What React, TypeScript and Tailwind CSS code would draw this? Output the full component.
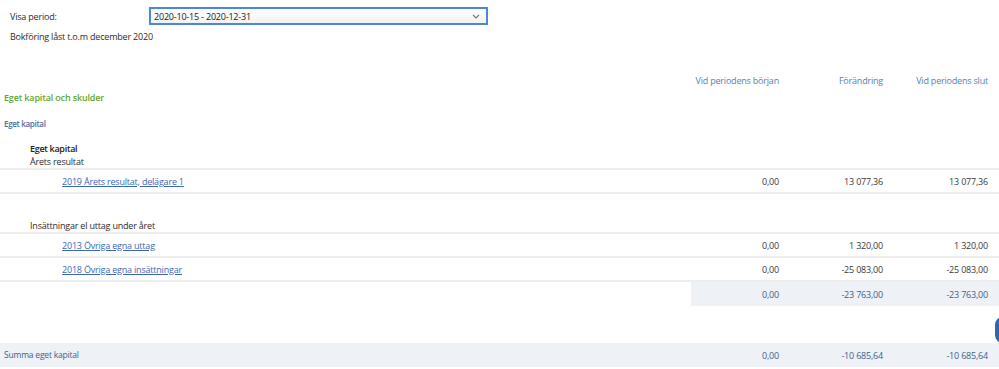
import React from "react";

const cols = ["w-[99px]", "w-[104px]", "w-[105px]"];

function Nums({ vals, cls }: { vals: string[]; cls: string }) {
  return (
    <div className="flex">
      {vals.map((v, i) => (
        <div key={i} className={`${cols[i]} pr-[11px] text-right whitespace-nowrap ${cls}`}>
          {v}
        </div>
      ))}
    </div>
  );
}

function Row({ label, vals }: { label: string; vals: string[] }) {
  return (
    <div className="flex items-center h-[24px] border-b-2 border-[#ededed]">
      <div className="flex-1 pl-[62px]">
        <a className="text-[#3d68b4] underline cursor-pointer">{label}</a>
      </div>
      <Nums vals={vals} cls="text-[#3a3a3a]" />
    </div>
  );
}

export default function App() {
  return (
    <div className="relative w-[999px] h-[369px] overflow-hidden bg-white text-[9px] tracking-[-0.2px] text-[#2b2b2b] font-['Open_Sans',sans-serif] leading-none">
      <div className="pt-[7px] flex items-center h-[25px]">
        <span className="w-[149px] pl-[10px]">Visa period:</span>
        <div className="w-[339px] h-[18px] border-2 border-[#4a88dc] bg-gradient-to-b from-white to-[#f2f2f2] flex items-center justify-between pl-[3px] pr-[6px]">
          <span className="text-[#222]">2020-10-15 - 2020-12-31</span>
          <svg width="8" height="5" viewBox="0 0 8 5" className="mt-[1px]">
            <path d="M1 1 L4 4 L7 1" fill="none" stroke="#777" strokeWidth="1.1" />
          </svg>
        </div>
      </div>
      <div className="h-[20px] flex items-center pl-[10px] mt-[1px]">Bokföring låst t.o.m december 2020</div>
      <div className="h-[26px]" />
      <div className="flex items-center h-[16px]">
        <div className="flex-1" />
        <Nums vals={["Vid periodens början", "Förändring", "Vid periodens slut"]} cls="text-[#4f7fc0]" />
      </div>
      <div className="h-[18px] flex items-center pl-[4px] text-[9px] tracking-[-0.15px] font-semibold text-[#62a82e]">Eget kapital och skulder</div>
      <div className="h-[10px]" />
      <div className="h-[16px] flex items-center pl-[4px] text-[8px] tracking-[-0.3px] font-semibold text-[#4a6ea8]">Eget kapital</div>
      <div className="h-[9px]" />
      <div className="h-[14px] flex items-center pl-[30px] font-semibold tracking-[-0.3px] text-[#222]">Eget kapital</div>
      <div className="h-[15px] flex items-center pl-[30px] border-b-2 border-[#ededed]">Årets resultat</div>
      <Row label="2019 Årets resultat, delägare 1" vals={["0,00", "13 077,36", "13 077,36"]} />
      <div className="h-[24px]" />
      <div className="h-[16px] flex items-center pl-[30px] border-b-2 border-[#ededed]">Insättningar el uttag under året</div>
      <Row label="2013 Övriga egna uttag" vals={["0,00", "1 320,00", "1 320,00"]} />
      <Row label="2018 Övriga egna insättningar" vals={["0,00", "-25 083,00", "-25 083,00"]} />
      <div className="flex h-[24px]">
        <div className="flex-1" />
        <div className="flex items-center bg-[#eef1f5]">
          <Nums vals={["0,00", "-23 763,00", "-23 763,00"]} cls="text-[#3f5f8f]" />
        </div>
      </div>
      <div className="h-[37px]" />
      <div className="flex items-center h-[24px] bg-[#eef1f5]">
        <div className="flex-1 pl-[4px] text-[8.5px] tracking-[-0.2px] text-[#3d5f8e]">Summa eget kapital</div>
        <Nums vals={["0,00", "-10 685,64", "-10 685,64"]} cls="text-[#3f5f8f]" />
      </div>
      <div className="absolute left-[995px] top-[317px] w-[30px] h-[26px] rounded-[8px] bg-[#2a68b0]" />
    </div>
  );
}
